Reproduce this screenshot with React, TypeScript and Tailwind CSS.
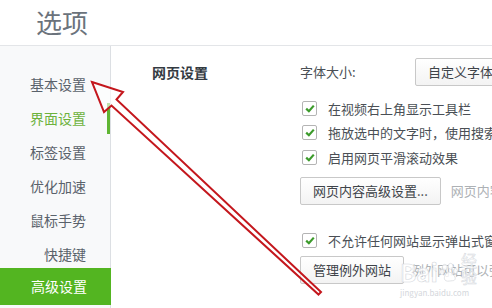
import React from "react";

const font = { fontFamily: '"Noto Sans CJK SC", "Noto Sans", sans-serif' };

const menu = ["基本设置", "界面设置", "标签设置", "优化加速", "鼠标手势", "快捷键"];

function CheckRow(props: { text: string; className?: string }) {
    return (
        <div className={"flex items-center h-[24.5px] " + (props.className ?? "")}>
            <div className="ml-[2px] w-[15px] h-[15px] rounded-[2px] border border-[#b4b4b4] bg-white flex items-center justify-center shrink-0">
                <svg width="10" height="9" viewBox="0 0 10 9">
                    <path d="M1.2 4.6 L3.9 7.2 L8.8 1.6" fill="none" stroke="#3c9b2b" strokeWidth="2.2" />
                </svg>
            </div>
            <span className="ml-[11px] whitespace-nowrap text-[13px] text-[#4a4f55]">{props.text}</span>
        </div>
    );
}

function Button(props: { text: string; className?: string }) {
    return (
        <div className={"h-[28px] px-[12px] flex items-center border border-[#c8c8c8] rounded-[2px] bg-gradient-to-b from-white to-[#f3f3f3] text-[13px] text-[#3e4349] whitespace-nowrap shrink-0 " + (props.className ?? "")}>
            {props.text}
        </div>
    );
}

export default function App() {
    return (
        <div className="relative w-[492px] h-[308px] overflow-hidden bg-white" style={font}>
            <div className="h-[46px] border-b border-[#e3e5e8] flex items-center pl-[36px]">
                <h1 className="text-[26px] leading-none text-[#6b737c] -mt-[2px]">选项</h1>
            </div>
            <div className="flex h-[262px]">
                <div className="w-[111px] shrink-0 border-r border-[#dcdfe3] bg-[#f8f9fa] pt-[21px] flex flex-col">
                    {menu.map((m, i) => (
                        <div key={m} className="relative h-[34px] flex items-center justify-end pr-[24px] text-[14px]">
                            <span className={i === 1 ? "text-[#6db23c]" : "text-[#5a626b]"}>{m}</span>
                            {i === 1 && <div className="absolute right-0 top-[2px] w-[3px] h-[31px] bg-[#5fb532]" />}
                        </div>
                    ))}
                    <div className="-mt-[3px] h-[37px] flex items-center justify-end pr-[24px] text-[14px] bg-[#53b521] text-white mr-[-1px]">
                        高级设置
                    </div>
                </div>
                <div className="flex-1 flex pl-[41px] pt-[12px]">
                    <div className="w-[148px] shrink-0 h-[28px] flex items-center text-[14px] font-bold text-[#333a41]">网页设置</div>
                    <div className="flex flex-col">
                        <div className="flex items-center h-[28px]">
                            <span className="w-[115px] shrink-0 text-[13px] text-[#4a4f55]">字体大小:</span>
                            <div className="h-[28px] w-[130px] shrink-0 border border-[#c8c8c8] rounded-[2px] bg-gradient-to-b from-white to-[#f3f3f3] flex items-center pl-[12px] text-[13px] text-[#3e4349] whitespace-nowrap">
                                自定义字体...
                            </div>
                        </div>
                        <CheckRow className="mt-[10px]" text="在视频右上角显示工具栏" />
                        <CheckRow text="拖放选中的文字时，使用搜索引擎搜索" />
                        <CheckRow text="启用网页平滑滚动效果" />
                        <div className="flex items-center mt-[7px]">
                            <Button text="网页内容高级设置..." />
                            <span className="ml-[10px] text-[13px] text-[#adb1b5] whitespace-nowrap">网页内容设置</span>
                        </div>
                        <CheckRow className="mt-[24px]" text="不允许任何网站显示弹出式窗口" />
                        <div className="flex items-center mt-[3px]">
                            <Button text="管理例外网站" />
                            <span className="ml-[7px] text-[13px] text-[#adb1b5] whitespace-nowrap">例外网站可以弹出窗口</span>
                        </div>
                    </div>
                </div>
            </div>
            {/* watermark */}
            <div className="absolute left-[400px] top-[252px] pointer-events-none flex flex-col items-start">
                <div className="flex items-end">
                    <span className="text-[24px] font-bold leading-none text-white/80 [-webkit-text-stroke:0.6px_#d4d7dc]">Bai</span>
                    <svg width="22" height="22" viewBox="0 0 22 22" className="mx-[1px]">
                        <g fill="white" fillOpacity="0.8" stroke="#d4d7dc" strokeWidth="0.7">
                            <ellipse cx="6" cy="5" rx="2.5" ry="3" />
                            <ellipse cx="12" cy="4" rx="2.5" ry="3" />
                            <ellipse cx="3" cy="10" rx="2.2" ry="2.6" />
                            <ellipse cx="17" cy="9" rx="2.2" ry="2.6" />
                            <path d="M10 10 C6 12 4 17 7 19 C9 20 12 19 14 19 C17 19 18 16 15 13 C13 11 12 10 10 10 Z" />
                        </g>
                    </svg>
                    <span className="text-[16px] leading-none text-white/80 [-webkit-text-stroke:0.5px_#d4d7dc]">经验</span>
                </div>
                <span className="text-[8px] text-[#d4d7dc] mt-[3px]">jingyan.baidu.com</span>
            </div>
            {/* red arrow annotation */}
            <svg className="absolute inset-0 pointer-events-none" width="492" height="308" viewBox="0 0 492 308">
                <polygon
                    points="92,82 123,92 116.5,99.5 321,292 318.5,294.5 111.5,105.5 104,112"
                    fill="white"
                    fillOpacity="0.6"
                    stroke="#c4171d"
                    strokeWidth="2"
                    strokeLinejoin="miter"
                />
            </svg>
        </div>
    );
}
